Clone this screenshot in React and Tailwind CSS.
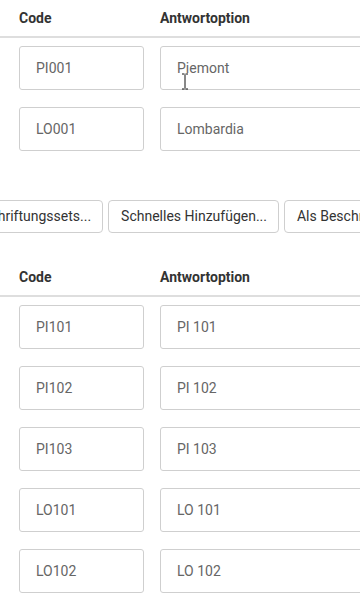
import React from 'react';

const font = { fontFamily: 'Roboto, "Liberation Sans", sans-serif' };

const HeaderRow = () => (
  <div className="flex items-center h-[38px] border-b-2 border-[#dedede] text-[14px] font-bold text-[#333]">
    <div className="w-[160px] pl-[19px]">Code</div>
    <div>Antwortoption</div>
  </div>
);

const OptionRow = ({ code, label, cursor }) => (
  <div className="flex gap-[16px] pl-[19px]">
    <input
      readOnly
      value={code}
      className="w-[125px] h-[44px] shrink-0 border border-[#cfcfcf] rounded-[3px] px-[16px] text-[14px] text-[#666] bg-white outline-none"
    />
    <div className="relative shrink-0">
      <input
        readOnly
        value={label}
        className="w-[260px] h-[44px] border border-[#cfcfcf] rounded-[3px] px-[16px] text-[14px] text-[#666] bg-white outline-none"
      />
      {cursor && (
        <svg className="absolute left-[21px] top-[27px]" width="8" height="17" viewBox="0 0 8 17">
          <path d="M1 1h2.5M4.5 1H7M4 1.5v14M1 16h2.5M4.5 16H7" stroke="#111" strokeWidth="1" fill="none" />
        </svg>
      )}
    </div>
  </div>
);

const first = [
  ['PI001', 'Piemont'],
  ['LO001', 'Lombardia'],
];

const second = [
  ['PI101', 'PI 101'],
  ['PI102', 'PI 102'],
  ['PI103', 'PI 103'],
  ['LO101', 'LO 101'],
  ['LO102', 'LO 102'],
];

export default function App() {
  return (
    <div className="w-[360px] h-[612px] bg-white overflow-hidden" style={font}>
      <HeaderRow />
      <div className="flex flex-col gap-[17px] pt-[8px]">
        {first.map(([c, l], i) => (
          <OptionRow key={c} code={c} label={l} cursor={i === 0} />
        ))}
      </div>

      <div className="flex gap-[5px] mt-[49px] ml-[-46px]">
        {['Beschriftungssets...', 'Schnelles Hinzufügen...', 'Als Beschriftungsset speichern...'].map((t) => (
          <button
            key={t}
            className="shrink-0 h-[33px] pl-[12px] pr-[11px] border border-[#cfcfcf] rounded-[4px] bg-white text-[14px] text-[#333] whitespace-nowrap"
          >
            {t}
          </button>
        ))}
      </div>

      <div className="mt-[26px]">
        <HeaderRow />
        <div className="flex flex-col gap-[17px] pt-[8px]">
          {second.map(([c, l]) => (
            <OptionRow key={c} code={c} label={l} />
          ))}
        </div>
      </div>
    </div>
  );
}
